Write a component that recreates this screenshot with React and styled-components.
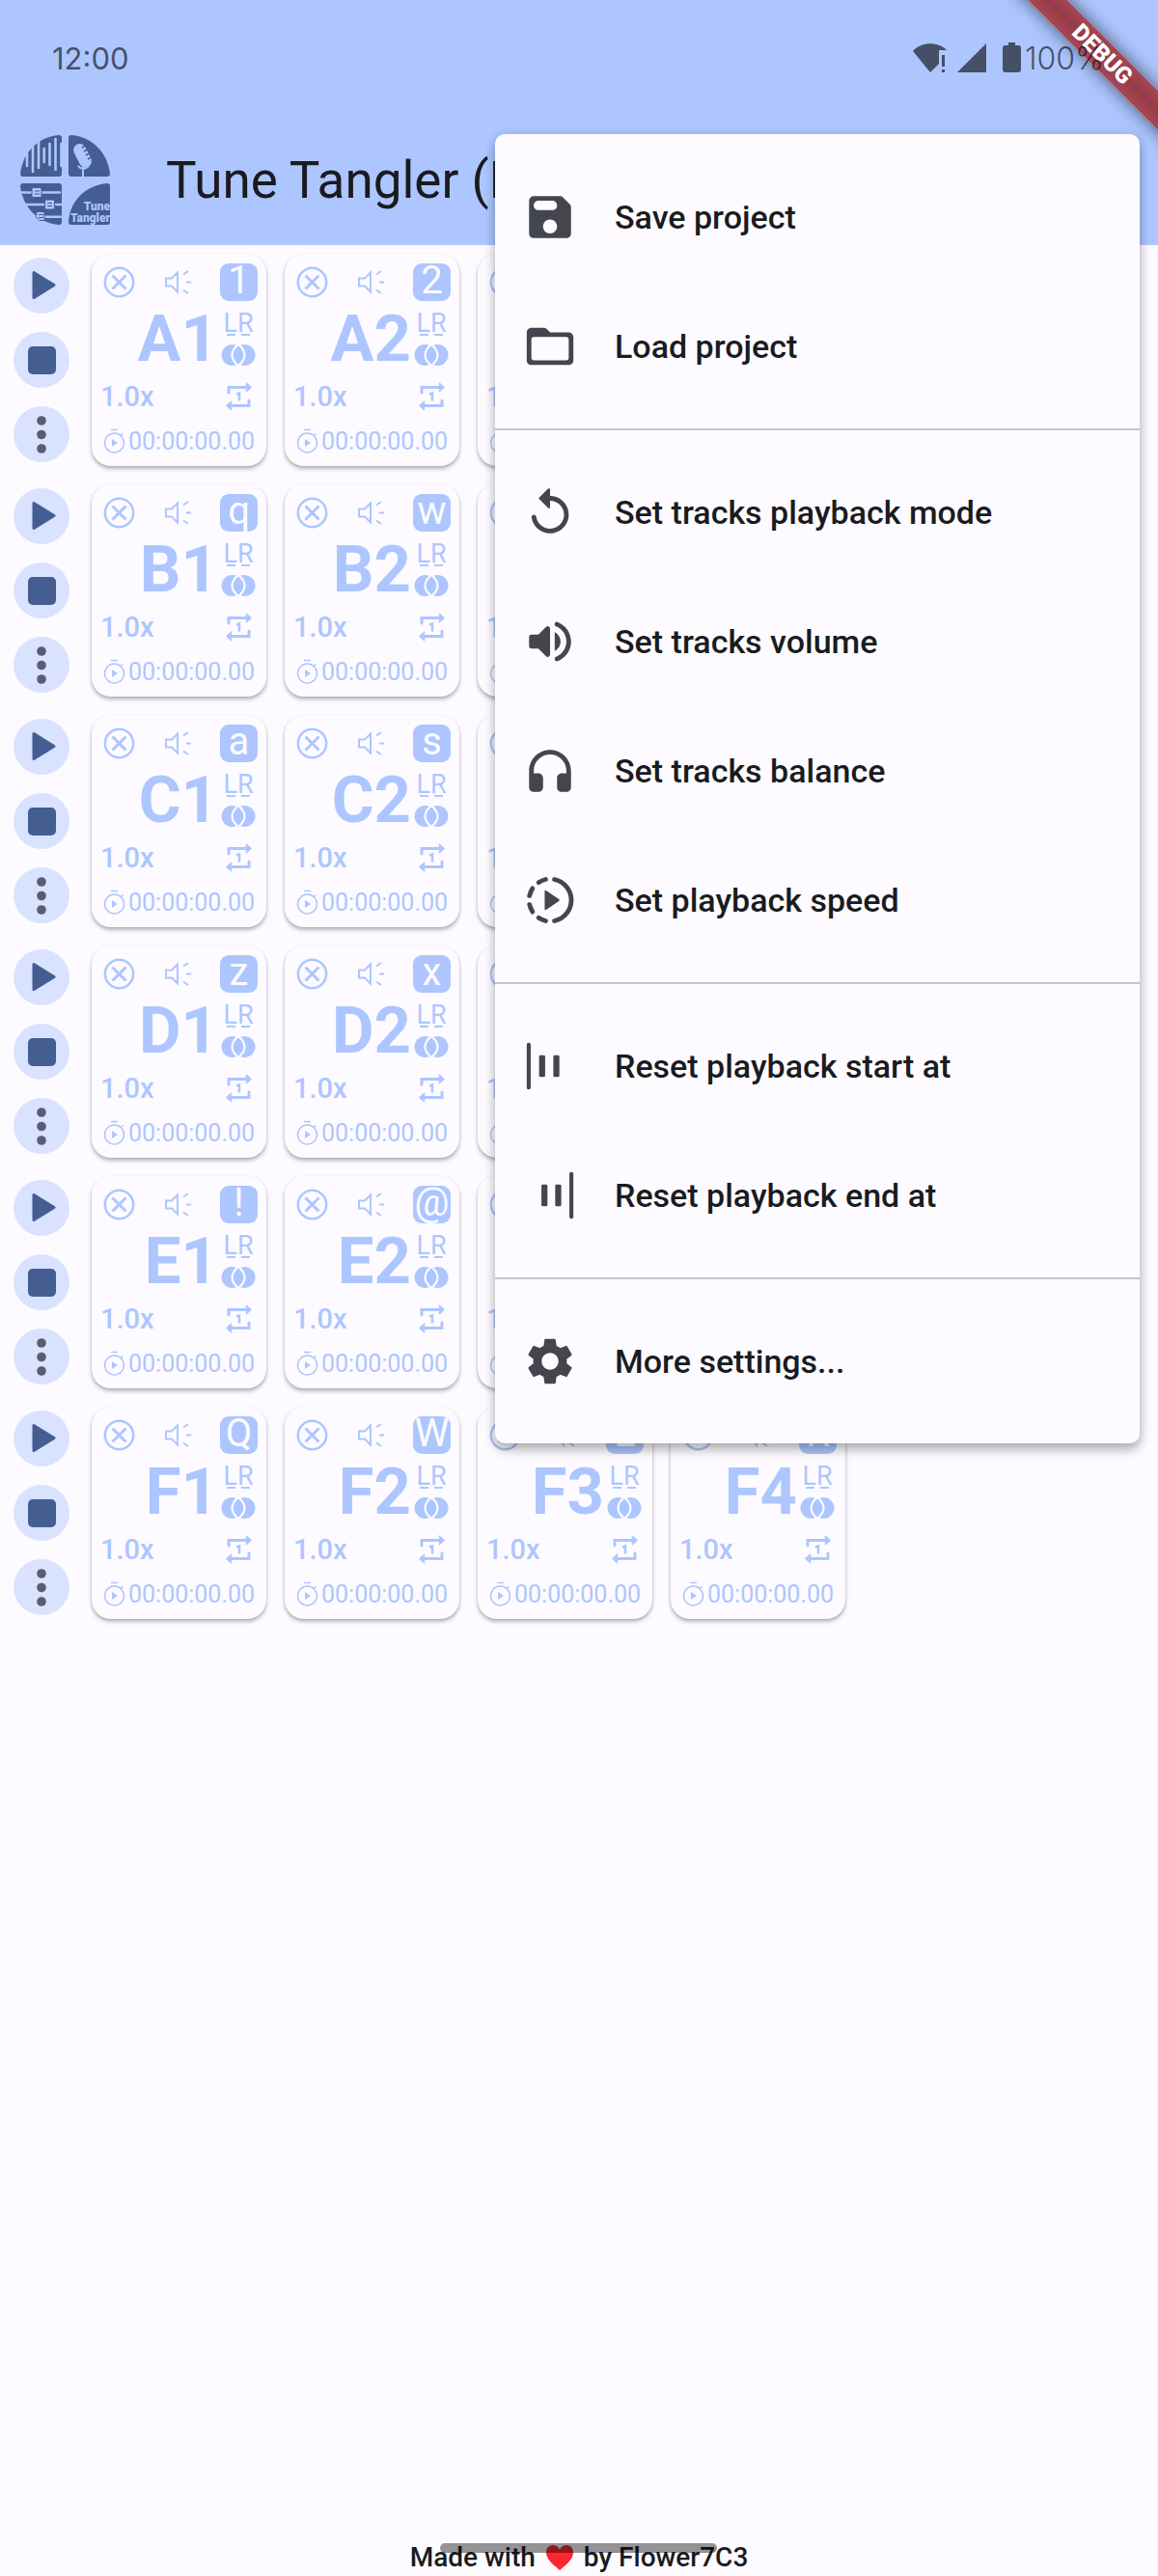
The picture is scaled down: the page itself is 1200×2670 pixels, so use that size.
import React from "react";
import styled, { createGlobalStyle } from "styled-components";

const colors = {
  bar: "#adc6ff",
  surface: "#fdfbff",
  primary: "#445e91",
  container: "#d9e2ff",
  text: "#1a1b20",
  icon: "#44464f",
  divider: "#c4c6d0",
};

const GlobalStyle = createGlobalStyle`
  * {
    box-sizing: border-box;
  }

  body {
    margin: 0;
    background: ${colors.surface};
    color: ${colors.text};
    font-family: Roboto, "Liberation Sans", sans-serif;
  }

  button {
    margin: 0;
    padding: 0;
    border: none;
    background: none;
    color: inherit;
    font: inherit;
    cursor: pointer;
  }

  svg {
    display: block;
    flex-shrink: 0;
  }
`;

const Page = styled.div`
  position: relative;
  display: flex;
  flex-direction: column;
  min-height: 100vh;
  overflow: hidden;
`;

// Header
const Header = styled.header`
  background: ${colors.bar};
`;

const StatusBar = styled.div`
  position: relative;
  z-index: 3;
  display: flex;
  align-items: center;
  justify-content: space-between;
  height: 120px;
  padding: 0 56px 0 54px;
  color: rgba(0, 0, 0, 0.6);
  font-family: Inter, Roboto, sans-serif;
  font-size: 31px;
`;

const StatusIcons = styled.div`
  display: flex;
  align-items: center;
  font-size: 32px;
  font-weight: 300;
`;

const AppBar = styled.div`
  display: flex;
  align-items: center;
  gap: 56px;
  height: 134px;
  padding: 0 20px;
`;

const Title = styled.h1`
  margin: 0;
  font-size: 53px;
  font-weight: 400;
  line-height: 64px;
  white-space: nowrap;
`;

// Debug ribbon in the corner
const Ribbon = styled.div`
  position: absolute;
  z-index: 2;
  top: 42px;
  right: -72px;
  width: 260px;
  height: 29px;
  transform: rotate(45deg);
  background: linear-gradient(#a64754, #963b47 50%, #a64754);
  box-shadow: 0 0 18px rgba(0, 0, 0, 0.6);
  color: #fff;
  font-size: 24px;
  font-weight: 900;
  line-height: 29px;
  text-align: center;
`;

// Track board
const Board = styled.main`
  display: flex;
  flex-direction: column;
  gap: 19px;
  padding: 9px 27% 24px 14px;
`;

const TrackRow = styled.section`
  display: flex;
  align-items: center;
  gap: 23px;
`;

const RowControls = styled.div`
  display: flex;
  flex-direction: column;
  gap: 19px;
`;

const RoundButton = styled.button`
  display: flex;
  align-items: center;
  justify-content: center;
  width: 58px;
  height: 58px;
  border-radius: 50%;
  background: ${colors.container};
`;

const Cards = styled.div`
  flex: 1;
  display: grid;
  grid-template-columns: repeat(4, 1fr);
  gap: 19px;
`;

const Card = styled.article`
  padding: 10px 9px 0;
  border-radius: 20px;
  background: ${colors.surface};
  color: ${colors.bar};
  box-shadow: 0 3px 4px rgba(0, 0, 0, 0.26), 0 1px 3px rgba(0, 0, 0, 0.1);
`;

const CardTop = styled.div`
  display: flex;
  align-items: center;
  justify-content: space-between;
  height: 39px;
`;

const KeyBadge = styled.kbd`
  width: 39px;
  height: 39px;
  border-radius: 9px;
  background: ${colors.bar};
  color: ${colors.surface};
  font-family: inherit;
  font-size: 40px;
  line-height: 36px;
  text-align: center;
`;

const CardName = styled.div`
  display: flex;
  align-items: center;
  justify-content: flex-end;
  gap: 3px;
  height: 78px;
  padding-right: 2px;
`;

const Name = styled.h2`
  margin: 0;
  font-size: 67px;
  font-weight: 700;
  line-height: 78px;
`;

const Channels = styled.div`
  display: flex;
  flex-direction: column;
  align-items: center;
  width: 36px;
  font-size: 27px;
  line-height: 22px;
`;

const OverlapIcon = styled.svg`
  margin-top: 9px;
`;

const CardSpeed = styled.div`
  display: flex;
  align-items: center;
  justify-content: space-between;
  height: 42px;
  font-size: 29px;
  font-weight: 500;
`;

const CardTime = styled.div`
  display: flex;
  align-items: center;
  height: 51px;
  font-size: 25px;
`;

// Popup menu
const Menu = styled.nav`
  position: absolute;
  z-index: 1;
  top: 139px;
  right: 19px;
  width: 668px;
  padding: 19px 0 18px;
  border-radius: 10px;
  background: ${colors.surface};
  box-shadow: 0 7px 12px rgba(0, 0, 0, 0.24), 0 2px 12px rgba(0, 0, 0, 0.14);
`;

const MenuItem = styled.button`
  display: flex;
  align-items: center;
  gap: 38px;
  width: 100%;
  height: 134px;
  padding: 0 28px;
  font-size: 34px;
  font-weight: 500;
  text-align: left;

  svg {
    color: ${colors.icon};
  }
`;

const Divider = styled.hr`
  height: 2px;
  margin: 18px 0;
  border: none;
  background: ${colors.divider};
`;

// Footer
const Footer = styled.footer`
  display: flex;
  align-items: center;
  justify-content: center;
  gap: 10px;
  margin-top: auto;
  font-size: 28px;
  font-weight: 500;
  line-height: 38px;
`;

const HomePill = styled.div`
  position: absolute;
  bottom: 24px;
  left: 50%;
  width: 287px;
  height: 10px;
  margin-left: -144px;
  border-radius: 5px;
  background: rgba(0, 0, 0, 0.42);
`;

const Logo = () => (
  <svg width="96" height="96" viewBox="0 0 96 96" role="img" aria-label="Tune Tangler logo">
    <g fill={colors.primary}>
      <path d="M44 4v37q0 3-3 3H4q-3 0-3-3C4 18 20 3 41 1q3 0 3 3z" />
      <path d="M51 4v37q0 3 3 3h37q3 0 3-3C91 18 75 3 54 1q-3 0-3 3z" />
      <path d="M44 91V54q0-3-3-3H4q-3 0-3 3c3 23 19 38 40 40q3 0 3-3z" />
      <path d="M51 91c1-21 17-38 40-40q3 0 3 3v37q0 3-3 3H54q-3 0-3-3z" />
    </g>
    <g stroke={colors.bar} strokeWidth="2.6" strokeLinecap="round">
      <path d="M8 20v13M14 13v26M20 7v28M25.700 15v14M31.500 10v22M37.500 5v32M43.500 10v23" />
      <path d="M3 60.500h39M6 73h37M14 85.700h29" />
    </g>
    <path d="M66 37v7M61 33q5 6 11 0M66 34v5" stroke={colors.bar} strokeWidth="2" fill="none" />
    <rect x="59" y="9" width="13" height="26" rx="6.500" fill={colors.bar} transform="rotate(-27 66 22)" />
    <path d="M65 14l5-3M67 18l5-3M69 22l5-3M71 26l5-3" stroke={colors.primary} strokeWidth="1.500" />
    <g fill={colors.bar} stroke={colors.primary}>
      <rect x="13" y="55.500" width="10" height="10" rx="1.500" />
      <rect x="26.500" y="68" width="10" height="10" rx="1.500" />
      <path d="M18 80.500h8v9h-5l-4-4z" />
      <path d="M16 59h5M16 62h5M29 71.500h5M29 74.500h5M20 83.500h5M20 86.500h5" fill="none" />
    </g>
    <g fill={colors.bar} fontFamily="Roboto, sans-serif" fontSize="12" fontWeight="900" textAnchor="end">
      <text x="94" y="79">Tune</text>
      <text x="94" y="91">Tangler</text>
    </g>
  </svg>
);

const StatusGlyphs = () => (
  <svg width="116" height="32" viewBox="0 0 116 32" fill="currentColor" aria-hidden="true">
    <path d="M0 9C9-1 26-1 35 8H27v14l-9 9z" />
    <path d="M30 13h3v12h-3zM30 28h3v3h-3z" />
    <path d="M76 1v30H46z" />
    <path d="M99 0h7v3h3q3 0 3 3v22q0 3-3 3H96q-3 0-3-3V6q0-3 3-3h3z" />
  </svg>
);

const PlayIcon = () => (
  <svg width="58" height="58" viewBox="0 0 58 58" aria-hidden="true">
    <path d="M21 15.500v26L42 28.500z" fill={colors.primary} stroke={colors.primary} strokeWidth="3" strokeLinejoin="round" />
  </svg>
);

const StopIcon = () => (
  <svg width="29" height="29" viewBox="0 0 29 29" aria-hidden="true">
    <rect width="29" height="29" rx="5" fill={colors.primary} />
  </svg>
);

const MoreIcon = () => (
  <svg width="10" height="39" viewBox="0 0 10 39" fill="#575e71" aria-hidden="true">
    <circle cx="5" cy="5" r="4.800" />
    <circle cx="5" cy="19.500" r="4.800" />
    <circle cx="5" cy="34" r="4.800" />
  </svg>
);

const ClearIcon = () => (
  <svg width="38" height="38" viewBox="0 0 38 38" fill="none" stroke="currentColor" strokeWidth="2.500" aria-hidden="true">
    <circle cx="19.500" cy="18.500" r="14.700" />
    <path d="M12.500 11.500l14 14M26.500 11.500l-14 14" strokeWidth="3" />
  </svg>
);

const SpeakerIcon = () => (
  <svg width="38" height="38" viewBox="0 0 38 38" fill="none" stroke="currentColor" strokeWidth="2" aria-hidden="true">
    <path d="M6 14.500h6l6-6v20l-6-6H6z" />
    <path d="M27 18.500h5M24 10.500l5-3.500M24 26.500l5 3.500" />
  </svg>
);

const RepeatOneIcon = () => (
  <svg width="38" height="38" viewBox="0 0 38 38" fill="none" stroke="currentColor" strokeWidth="3" strokeLinecap="round" aria-hidden="true">
    <path d="M8 15V9.500H26.500M29 23v5.500H10.500" />
    <path d="M26.500 5l5 4.500-5 4.500zM10.500 24l-5 4.500 5 4.500z" fill="currentColor" strokeWidth="1" strokeLinejoin="round" />
    <path d="M16 16.500l3-1v8" strokeWidth="2.500" strokeLinecap="butt" />
  </svg>
);

const StopwatchIcon = () => (
  <svg width="29" height="32" viewBox="0 0 29 32" fill="none" stroke="currentColor" strokeWidth="1.500" aria-hidden="true">
    <circle cx="14.500" cy="17" r="10" />
    <path d="M11 3.500h7M21 9.500l2.500-2" />
    <path d="M12 13v8l6-4z" fill="currentColor" stroke="none" />
  </svg>
);

const menuIcons = {
  save: (
    <path d="M17.590 3.590c-.38-.38-.89-.59-1.420-.59H5a2 2 0 0 0-2 2v14c0 1.100.9 2 2 2h14c1.100 0 2-.9 2-2V7.830c0-.53-.21-1.040-.59-1.410l-2.820-2.830zM12 19c-1.660 0-3-1.340-3-3s1.340-3 3-3 3 1.340 3 3-1.340 3-3 3zm1-10H7c-1.100 0-2-.9-2-2s.9-2 2-2h6c1.100 0 2 .9 2 2s-.9 2-2 2z" />
  ),
  folder: (
    <path d="M20 6h-8l-1.410-1.410C10.210 4.210 9.700 4 9.170 4H4c-1.100 0-1.990.9-1.990 2L2 18c0 1.100.9 2 2 2h16c1.100 0 2-.9 2-2V8c0-1.100-.9-2-2-2zm-1 12H5c-.55 0-1-.45-1-1V9c0-.55.45-1 1-1h14c.55 0 1 .45 1 1v8c0 .55-.45 1-1 1z" />
  ),
  replay: (
    <path d="M12 5V2.210c0-.45-.54-.67-.85-.35l-3.800 3.790c-.2.2-.2.510 0 .71l3.790 3.790c.32.310.86.090.86-.36V7c3.730 0 6.680 3.420 5.860 7.290-.47 2.270-2.310 4.100-4.570 4.570-3.570.75-6.750-1.700-7.230-5.010-.07-.48-.49-.85-.98-.85-.6 0-1.080.53-1 1.130.62 4.390 4.800 7.640 9.530 6.720 3.120-.61 5.630-3.120 6.240-6.240C20.840 9.480 16.940 5 12 5z" />
  ),
  volume: (
    <path d="M3 10v4c0 .55.45 1 1 1h3l3.290 3.290c.63.63 1.710.18 1.710-.71V6.410c0-.89-1.080-1.340-1.710-.71L7 9H4c-.55 0-1 .45-1 1zm13.500 2c0-1.770-1.020-3.290-2.500-4.030v8.050c1.480-.73 2.500-2.250 2.500-4.020zM14 4.450v.2c0 .38.25.71.6.85C17.180 6.530 19 9.060 19 12s-1.820 5.470-4.400 6.500c-.36.14-.6.47-.6.85v.2c0 .63.63 1.070 1.210.85C18.600 19.110 21 15.840 21 12s-2.400-7.110-5.790-8.400c-.58-.23-1.210.22-1.210.85z" />
  ),
  headset: (
    <path d="M12 3c-4.970 0-9 4.030-9 9v7c0 1.100.9 2 2 2h2c1.100 0 2-.9 2-2v-4c0-1.100-.9-2-2-2H5v-1c0-3.870 3.130-7 7-7s7 3.130 7 7v1h-2c-1.100 0-2 .9-2 2v4c0 1.100.9 2 2 2h2c1.100 0 2-.9 2-2v-7c0-4.970-4.030-9-9-9z" />
  ),
  speed: (
    <>
      <path
        d="M13.900 3.100a9.100 9.100 0 0 1 0 17.800M10.100 3.100a9 9 0 0 0-3 1.300M4.500 7a9 9 0 0 0-1.300 3.100M3.200 13.900a9 9 0 0 0 1.300 3.100M7.100 19.600a9 9 0 0 0 3 1.300"
        fill="none"
        stroke="currentColor"
        strokeWidth="2"
        strokeLinecap="round"
      />
      <path d="M9.700 8.200v7.600q0 .7.600.3l5.500-3.700q.6-.4 0-.8l-5.500-3.700q-.6-.4-.6.3z" />
    </>
  ),
  start: (
    <>
      <rect x="2" y="2" width="1.700" height="20" rx=".8" />
      <rect x="7.300" y="7.300" width="2.600" height="9.400" rx=".6" />
      <rect x="13.400" y="7.300" width="2.600" height="9.400" rx=".6" />
    </>
  ),
  end: (
    <>
      <rect x="8.300" y="7.300" width="2.600" height="9.400" rx=".6" />
      <rect x="14.200" y="7.300" width="2.600" height="9.400" rx=".6" />
      <rect x="20.300" y="2" width="1.700" height="20" rx=".8" />
    </>
  ),
  settings: (
    <path d="M19.140 12.940c.04-.3.060-.61.060-.94 0-.32-.02-.64-.07-.94l2.030-1.580c.18-.14.230-.41.120-.61l-1.920-3.320c-.12-.22-.37-.29-.59-.22l-2.390.96c-.5-.38-1.030-.7-1.620-.94l-.36-2.540c-.04-.24-.24-.41-.48-.41h-3.840c-.24 0-.43.17-.47.41l-.36 2.540c-.59.24-1.130.57-1.620.94l-2.390-.96c-.22-.08-.47 0-.59.22L2.740 8.870c-.12.21-.08.47.12.61l2.030 1.580c-.05.3-.09.63-.09.94s.02.64.07.94l-2.030 1.580c-.18.14-.23.41-.12.61l1.920 3.320c.12.22.37.29.59.22l2.390-.96c.5.38 1.030.7 1.620.94l.36 2.540c.05.24.24.41.48.41h3.840c.24 0 .44-.17.47-.41l.36-2.540c.59-.24 1.130-.56 1.620-.94l2.390.96c.22.08.47 0 .59-.22l1.920-3.320c.12-.22.070-.47-.12-.61l-2.010-1.580zM12 15.600c-1.980 0-3.600-1.620-3.600-3.600s1.620-3.600 3.600-3.600 3.600 1.620 3.600 3.600-1.620 3.600-3.600 3.600z" />
  ),
};

const menuGroups = [
  [
    { icon: "save", label: "Save project" },
    { icon: "folder", label: "Load project" },
  ],
  [
    { icon: "replay", label: "Set tracks playback mode" },
    { icon: "volume", label: "Set tracks volume" },
    { icon: "headset", label: "Set tracks balance" },
    { icon: "speed", label: "Set playback speed" },
  ],
  [
    { icon: "start", label: "Reset playback start at" },
    { icon: "end", label: "Reset playback end at" },
  ],
  [{ icon: "settings", label: "More settings..." }],
];

const rows = [
  { name: "A", keys: ["1", "2", "3", "4"] },
  { name: "B", keys: ["q", "w", "e", "r"] },
  { name: "C", keys: ["a", "s", "d", "f"] },
  { name: "D", keys: ["z", "x", "c", "v"] },
  { name: "E", keys: ["!", "@", "#", "$"] },
  { name: "F", keys: ["Q", "W", "E", "R"] },
];

const Track = ({ name, shortcut }) => (
  <Card>
    <CardTop>
      <button aria-label={`Clear ${name}`}>
        <ClearIcon />
      </button>
      <button aria-label={`Volume of ${name}`}>
        <SpeakerIcon />
      </button>
      <KeyBadge>{shortcut}</KeyBadge>
    </CardTop>
    <CardName>
      <Name>{name}</Name>
      <Channels>
        <span>LR</span>
        <svg width="24" height="2" viewBox="0 0 24 2" aria-hidden="true">
          <path d="M0 1h9M15 1h9" stroke="currentColor" strokeWidth="2" />
        </svg>
        <OverlapIcon width="36" height="22" viewBox="0 0 36 22" fill="currentColor" aria-hidden="true">
          <circle cx="11.500" cy="11" r="11" />
          <circle cx="24.500" cy="11" r="11" />
          <path d="M18 0q-13 11 0 22q13-11 0-22z" stroke={colors.surface} strokeWidth="2.200" />
        </OverlapIcon>
      </Channels>
    </CardName>
    <CardSpeed>
      <span>1.0x</span>
      <button aria-label={`Playback mode of ${name}`}>
        <RepeatOneIcon />
      </button>
    </CardSpeed>
    <CardTime>
      <StopwatchIcon />
      <time>00:00:00.00</time>
    </CardTime>
  </Card>
);

const App = () => {
  return (
    <>
      <GlobalStyle />
      <Page>
        <Header>
          <StatusBar>
            <span>12:00</span>
            <StatusIcons>
              <StatusGlyphs />
              <span>100%</span>
            </StatusIcons>
          </StatusBar>
          <AppBar>
            <Logo />
            <Title>Tune Tangler (Dev)</Title>
          </AppBar>
        </Header>

        <Board>
          {rows.map((row) => (
            <TrackRow key={row.name}>
              <RowControls>
                <RoundButton aria-label={`Play row ${row.name}`}>
                  <PlayIcon />
                </RoundButton>
                <RoundButton aria-label={`Stop row ${row.name}`}>
                  <StopIcon />
                </RoundButton>
                <RoundButton aria-label={`Row ${row.name} options`}>
                  <MoreIcon />
                </RoundButton>
              </RowControls>
              <Cards>
                {row.keys.map((key, index) => (
                  <Track key={key} name={`${row.name}${index + 1}`} shortcut={key} />
                ))}
              </Cards>
            </TrackRow>
          ))}
        </Board>

        <Footer>
          <span>Made with</span>
          <svg width="30" height="28" viewBox="0 0 30 28" role="img" aria-label="love">
            <path d="M15 27C11 23 1 17 1 8.500 1 4 4 1 8 1c3 0 5.500 1.500 7 4.500C16.500 2.500 19 1 22 1c4 0 7 3 7 7.500C29 17 19 23 15 27z" fill="#ff252e" />
          </svg>
          <span>by Flower7C3</span>
        </Footer>

        <Menu aria-label="Project menu">
          {menuGroups.map((group, index) => (
            <React.Fragment key={group[0].icon}>
              {index > 0 && <Divider />}
              {group.map((item) => (
                <MenuItem key={item.icon}>
                  <svg width="58" height="58" viewBox="0 0 24 24" fill="currentColor" aria-hidden="true">
                    {menuIcons[item.icon]}
                  </svg>
                  {item.label}
                </MenuItem>
              ))}
            </React.Fragment>
          ))}
        </Menu>

        <Ribbon>DEBUG</Ribbon>
        <HomePill />
      </Page>
    </>
  );
};

export default App;
